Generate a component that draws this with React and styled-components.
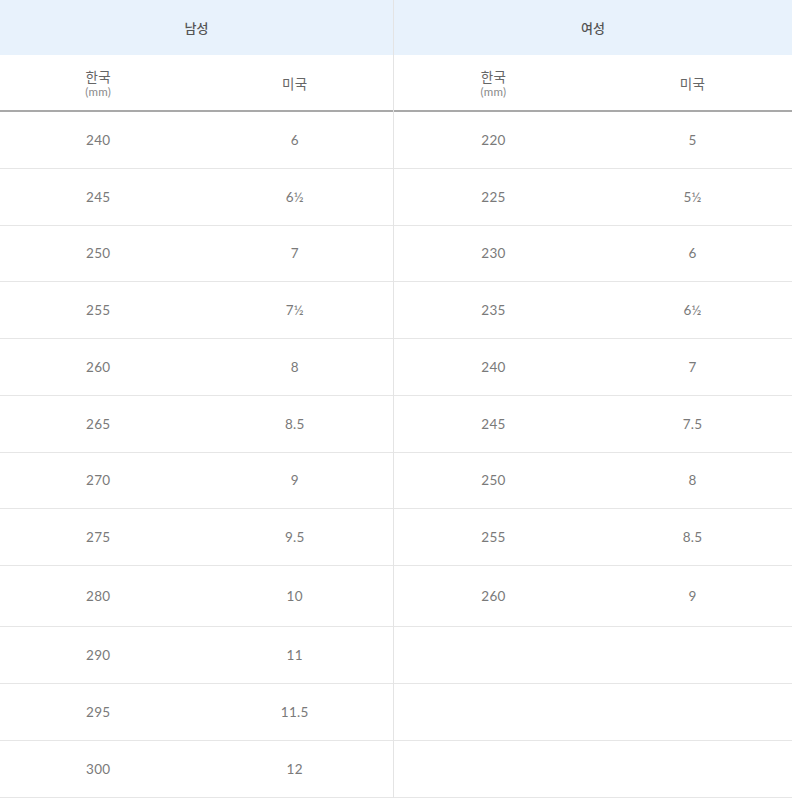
import React from "react";
import styled, { createGlobalStyle } from "styled-components";

const men = [
  ["240", "6"],
  ["245", "6½"],
  ["250", "7"],
  ["255", "7½"],
  ["260", "8"],
  ["265", "8.5"],
  ["270", "9"],
  ["275", "9.5"],
  ["280", "10"],
  ["290", "11"],
  ["295", "11.5"],
  ["300", "12"],
];

const women = [
  ["220", "5"],
  ["225", "5½"],
  ["230", "6"],
  ["235", "6½"],
  ["240", "7"],
  ["245", "7.5"],
  ["250", "8"],
  ["255", "8.5"],
  ["260", "9"],
  ["", ""],
  ["", ""],
  ["", ""],
];

// row heights taken from the reference (the 9th row is a bit taller)
const rowHeight = (i) => (i < 8 ? 56.75 : i === 8 ? 61 : 57);

const SizePanel = ({ title, rows, left }) => {
  return (
    <Panel left={left}>
      <GroupHead>{title}</GroupHead>
      <SubHead>
        <Cell>
          <HeadLabel>한국</HeadLabel>
          <Unit>(mm)</Unit>
        </Cell>
        <Cell>
          <HeadLabel>미국</HeadLabel>
        </Cell>
      </SubHead>
      {rows.map(([kr, us], i) => (
        <Row key={i} style={{ height: rowHeight(i) }}>
          <Cell>{kr}</Cell>
          <Cell>{us}</Cell>
        </Row>
      ))}
    </Panel>
  );
};

const App = () => {
  return (
    <>
      <GlobalStyle />
      <Chart>
        <SizePanel title="남성" rows={men} left />
        <SizePanel title="여성" rows={women} />
      </Chart>
    </>
  );
};

const GlobalStyle = createGlobalStyle`
  * {
    box-sizing: border-box;
  }
  body {
    margin: 0;
    background: #fff;
    font-family: Lato, "Noto Sans CJK KR", sans-serif;
  }
`;

const Chart = styled.div`
  display: flex;
  width: 792px;
`;

const Panel = styled.div`
  width: ${(p) => (p.left ? "394px" : "398px")};
  border-right: ${(p) => (p.left ? "1px solid #e4e4e4" : "none")};
  display: flex;
  flex-direction: column;
`;

const GroupHead = styled.div`
  height: 55px;
  background: #e8f2fc;
  display: flex;
  align-items: center;
  justify-content: center;
  font-family: "Noto Sans CJK KR", sans-serif;
  font-size: 13px;
  font-weight: 500;
  color: #555;
`;

const SubHead = styled.div`
  height: 57px;
  display: grid;
  grid-template-columns: 1fr 1fr;
  border-bottom: 2px solid #a9a9a9;
`;

const Row = styled.div`
  display: grid;
  grid-template-columns: 1fr 1fr;
  border-bottom: 1px solid #e6e6e6;
`;

const Cell = styled.div`
  display: flex;
  flex-direction: column;
  align-items: center;
  justify-content: center;
  font-size: 13.5px;
  color: #7a7a7a;
  letter-spacing: 0.3px;
`;

const HeadLabel = styled.span`
  font-family: "Noto Sans CJK KR", sans-serif;
  font-size: 13.5px;
  color: #666;
  line-height: 18px;
`;

const Unit = styled.span`
  font-size: 11.5px;
  color: #8a8a8a;
  line-height: 14px;
`;

export default App;
